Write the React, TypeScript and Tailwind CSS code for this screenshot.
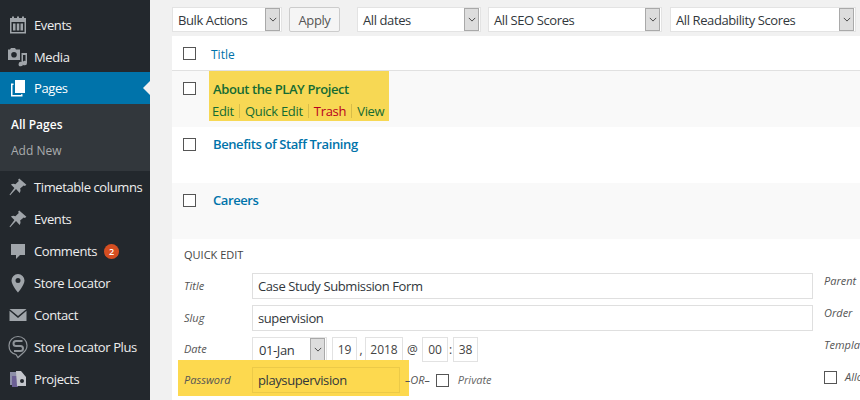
import type { ReactNode } from 'react';

const font = { fontFamily: '"Open Sans", "Noto Sans", sans-serif' };

function Pin() {
  return (
    <svg viewBox="0 0 20 20" className="w-5 h-5 fill-[#a0a5aa]">
      <path d="M11.2 1.6l7.2 6.1-1.5 1.3-1.2-.6-3.6 3.2c.7 1.6.5 3-.4 4.3L8 12l-5.8 6.3-.7-.6L6.4 10.9 2.9 7.5c1.6-.9 3.1-.9 4.5-.2L10.800 4l-.7-1.300z" />
    </svg>
  );
}

function CalendarIcon() {
  return (
    <svg viewBox="0 0 20 20" className="w-5 h-5 fill-[#a0a5aa]">
      <path d="M4 1.500h2v2.200h-2zM9 1.500h2v2.200h-2zM14 1.500h2v2.200h-2z" />
      <path
        fillRule="evenodd"
        d="M2 3h16v15.500H2zM3.500 7v10h13V7zM5 8.500h2.500v7H5zM8.800 8.500h2.500v7H8.800zM12.500 8.500H15v7h-2.500z"
      />
    </svg>
  );
}

function MediaIcon() {
  return (
    <svg viewBox="0 0 20 20" className="w-5 h-5 fill-[#a0a5aa]">
      <path
        fillRule="evenodd"
        d="M3 1h4l1 1.500h4V13H0V2.500h2zM6 5a2.800 2.800 0 100 5.600A2.800 2.800 0 006 5z"
      />
      <path d="M13.500 6H19v10a2.200 2.200 0 11-1.500-2V8h-2.500v9a2.200 2.200 0 11-1.500-2z" />
    </svg>
  );
}

function PagesIcon() {
  return (
    <svg viewBox="0 0 20 20" className="w-5 h-5 fill-white">
      <path d="M7 2h10v13H7z" />
      <path d="M3 5.500h2.500V7H4.500v10H13v-.8h1.500v2.300H3z" />
    </svg>
  );
}

function CommentIcon() {
  return (
    <svg viewBox="0 0 20 20" className="w-5 h-5 fill-[#a0a5aa]">
      <path d="M3 3h14v11h-5l-4 4v-4H3z" />
    </svg>
  );
}

function LocationIcon() {
  return (
    <svg viewBox="0 0 20 20" className="w-5 h-5 fill-[#a0a5aa]">
      <path
        fillRule="evenodd"
        d="M10 1a6.500 6.500 0 016.500 6.500C16.500 12 10 19.500 10 19.500S3.500 12 3.500 7.500A6.500 6.500 0 0110 1zm0 4a2.500 2.500 0 100 5 2.500 2.500 0 000-5z"
      />
    </svg>
  );
}

function MailIcon() {
  return (
    <svg viewBox="0 0 20 20" className="w-5 h-5 fill-[#a0a5aa]">
      <path d="M1.500 4h17L10 11z" />
      <path d="M1.500 5.800L10 13l8.500-7.200V16h-17z" />
    </svg>
  );
}

function StoreLocatorPlusIcon() {
  return (
    <svg viewBox="0 0 22 24" className="w-[22px] h-6 fill-none stroke-[#8f9499]" strokeWidth="1.200">
      <path d="M11 1.500a9 9 0 019 9c0 3.500-2 6-4.500 8L11 22.500 9 19.500C4.500 18.500 2 15 2 10.500a9 9 0 019-9z" />
      <path strokeWidth="2" d="M15.500 6H9a2.500 2.500 0 000 5h4.500a2.500 2.500 0 010 5H7" />
    </svg>
  );
}

function ProjectsIcon() {
  return (
    <svg viewBox="0 0 20 20" className="w-5 h-5">
      <path className="fill-[#8d8fa8]" d="M2 3h7l2 2v11H2z" />
      <path className="fill-[#6b5f94]" d="M4 7h6v11H4z" />
      <path className="fill-[#c4c6cc]" d="M8 2h5l5 6v9H9z" />
      <circle className="fill-[#23282d]" cx="14" cy="12" r="2" />
    </svg>
  );
}

function MenuItem({
  icon,
  label,
  badge,
}: {
  icon: ReactNode;
  label: string;
  badge?: string;
}) {
  return (
    <div className="flex items-center h-8 text-[13px] text-[#eeeeee]">
      <div className="w-[34px] flex justify-center shrink-0 pl-[1px]">{icon}</div>
      <span className="whitespace-nowrap pt-[2px]">{label}</span>
      {badge && (
        <span className="ml-[7px] mt-[1px] w-[15px] h-[15px] rounded-full bg-[#d54e21] text-white text-[9px] font-semibold tracking-normal flex items-center justify-center">
          {badge}
        </span>
      )}
    </div>
  );
}

function Sidebar() {
  return (
    <aside className="w-[150px] shrink-0 bg-[#23282d] pt-[9px]">
      <MenuItem icon={<CalendarIcon />} label="Events" />
      <MenuItem icon={<MediaIcon />} label="Media" />
      <div className="relative flex items-center h-8 text-[13px] text-white bg-[#0073aa] mt-[-1px]">
        <div className="w-[34px] flex justify-center shrink-0 pl-[1px]">
          <PagesIcon />
        </div>
        <span className="pt-[2px]">Pages</span>
        <span className="absolute right-0 top-[9px] border-y-[7px] border-y-transparent border-r-[7px] border-r-[#f1f1f1]" />
      </div>
      <div className="bg-[#32373c] h-[67px] pl-[11px] pt-[8px] text-[12px] leading-[26px] tracking-normal">
        <div className="font-semibold text-white">All Pages</div>
        <div className="text-[#a9abad]">Add New</div>
      </div>
      <MenuItem icon={<Pin />} label="Timetable columns" />
      <MenuItem icon={<Pin />} label="Events" />
      <MenuItem icon={<CommentIcon />} label="Comments" badge="2" />
      <MenuItem icon={<LocationIcon />} label="Store Locator" />
      <MenuItem icon={<MailIcon />} label="Contact" />
      <MenuItem icon={<StoreLocatorPlusIcon />} label="Store Locator Plus" />
      <MenuItem icon={<ProjectsIcon />} label="Projects" />
    </aside>
  );
}

function FakeSelect({ label, className }: { label: string; className: string }) {
  return (
    <div
      className={`flex items-center justify-between h-[25px] bg-white border border-[#e3e3e3] pl-[5px] pr-[1px] text-[13px] text-[#32373c] ${className}`}
    >
      <span className="whitespace-nowrap pt-[2px]">{label}</span>
      <span className="w-[15px] h-[23px] bg-[#dddddd] border border-[#a9a9a9] flex items-center justify-center">
        <svg viewBox="0 0 10 6" className="w-[8px] h-[5px] fill-none stroke-[#444444]" strokeWidth="1.200">
          <path d="M1 1l4 4 4-4" />
        </svg>
      </span>
    </div>
  );
}

function Checkbox() {
  return <div className="w-[13px] h-[13px] border border-[#555555] bg-white shrink-0" />;
}

function TextInput({ value, className }: { value: string; className: string }) {
  return (
    <div
      className={`flex items-center h-[26px] bg-white border border-[#dfdfdf] pl-[5px] pt-[1px] text-[13px] text-[#32373c] ${className}`}
    >
      {value}
    </div>
  );
}

function EditRow({ label, children }: { label: string; children: ReactNode }) {
  return (
    <div className="flex items-center">
      <span className="w-[68px] text-[11px] italic tracking-normal text-[#555555] shrink-0">{label}</span>
      {children}
    </div>
  );
}

function PageRow({ title, className }: { title: string; className: string }) {
  return (
    <div className={`flex h-[56px] pl-[11px] pt-[11px] ${className}`}>
      <Checkbox />
      <a className="ml-[17px] text-[13px] font-semibold text-[#0073aa] leading-[13px]">{title}</a>
    </div>
  );
}

function RowSep() {
  return <span className="w-px h-[14px] mx-[5px] bg-[#d8bd48]" />;
}

function NumBox({ value, className }: { value: string; className: string }) {
  return (
    <span className={`h-[25px] border border-[#e2e2e2] flex items-center justify-center ${className}`}>{value}</span>
  );
}

export default function App() {
  return (
    <div className="flex w-[860px] h-[400px] overflow-hidden bg-[#f1f1f1] tracking-[-0.4px]" style={font}>
      <Sidebar />
      <main className="flex-1 min-w-0 pl-[22px]">
        {/* Toolbar */}
        <div className="flex items-center h-[36px] pt-[3px]">
          <FakeSelect label="Bulk Actions" className="w-[110px]" />
          <div className="ml-[7px] w-[51px] h-[25px] pt-[2px] rounded-[2px] bg-[#f5f5f5] border border-[#cccccc] text-[13px] text-[#555555] flex items-center justify-center">
            Apply
          </div>
          <FakeSelect label="All dates" className="ml-[17px] w-[124px]" />
          <FakeSelect label="All SEO Scores" className="ml-[7px] w-[174px]" />
          <FakeSelect label="All Readability Scores" className="ml-[8px] w-[186px]" />
        </div>

        {/* Table head */}
        <div className="flex items-center h-[35px] bg-white border-b border-[#e1e1e1] pl-[11px]">
          <Checkbox />
          <span className="ml-[15px] pt-[3px] text-[12px] tracking-normal text-[#0073aa]">Title</span>
        </div>

        {/* First row, highlighted */}
        <div className="flex h-[56px] bg-[#f9f9f9] pl-[11px]">
          <div className="pt-[11px]">
            <Checkbox />
          </div>
          <div className="ml-[13px] w-[180px] h-[50px] bg-[#f7d854] pl-[4px] pt-[9px]">
            <div className="text-[13px] font-semibold text-[#146b33] leading-[18px]">About the PLAY Project</div>
            <div className="flex items-center text-[13px] tracking-[-0.3px] leading-[16px] mt-[5px] -ml-[1px] text-[#146b33] whitespace-nowrap">
              <span>Edit</span>
              <RowSep />
              <span>Quick Edit</span>
              <RowSep />
              <span className="text-[#b8001f]">Trash</span>
              <RowSep />
              <span>View</span>
            </div>
          </div>
        </div>

        <PageRow title="Benefits of Staff Training" className="bg-white" />
        <PageRow title="Careers" className="bg-[#f9f9f9]" />

        {/* Quick edit */}
        <div className="bg-white h-[170px] pt-[9px] pl-[12px]">
          <div className="text-[11px] tracking-normal text-[#444444] leading-[14px]">QUICK EDIT</div>
          <div className="flex mt-[11px]">
            <div className="w-[629px] shrink-0 flex flex-col gap-[6px]">
              <EditRow label="Title">
                <TextInput value="Case Study Submission Form" className="w-[561px]" />
              </EditRow>
              <EditRow label="Slug">
                <TextInput value="supervision" className="w-[561px]" />
              </EditRow>
              <EditRow label="Date">
                <FakeSelect label="01-Jan" className="w-[75px] pl-[6px]" />
                <div className="ml-[5px] flex items-center text-[12px] tracking-normal text-[#444444]">
                  <NumBox value="19" className="w-[25px]" />
                  <span className="w-[8px] text-center">,</span>
                  <NumBox value="2018" className="w-[38px]" />
                  <span className="w-[19px] text-center">@</span>
                  <NumBox value="00" className="w-[26px]" />
                  <span className="w-[5px] text-center">:</span>
                  <NumBox value="38" className="w-[25px]" />
                </div>
              </EditRow>
              <div className="relative flex items-start mt-[-8px] -ml-[6px]">
                <div className="flex items-start w-[231px] h-[36px] bg-[#fdd94f] pl-[6px] pt-[7px]">
                  <span className="w-[68px] pt-[5px] text-[11px] italic tracking-normal text-[#555555] shrink-0">
                    Password
                  </span>
                  <TextInput value="playsupervision" className="w-[148px] !bg-[#fdd94f] !border-[#ecca48]" />
                </div>
                <div className="flex items-center h-[36px] pt-[4px]">
                  <span className="ml-[-4px] text-[11px] italic tracking-normal text-[#555555]">–OR–</span>
                  <div className="ml-[6px]">
                    <Checkbox />
                  </div>
                  <span className="ml-[9px] text-[11px] italic tracking-normal text-[#666666]">Private</span>
                </div>
              </div>
            </div>
            <div className="flex flex-col -mt-[8px] text-[11px] italic tracking-normal text-[#555555] ml-[11px] leading-[32px] w-[60px] overflow-hidden whitespace-nowrap">
              <span>Parent</span>
              <span>Order</span>
              <span>Template</span>
              <div className="flex items-center">
                <Checkbox />
                <span className="ml-[8px]">Allow</span>
              </div>
            </div>
          </div>
        </div>
      </main>
    </div>
  );
}
